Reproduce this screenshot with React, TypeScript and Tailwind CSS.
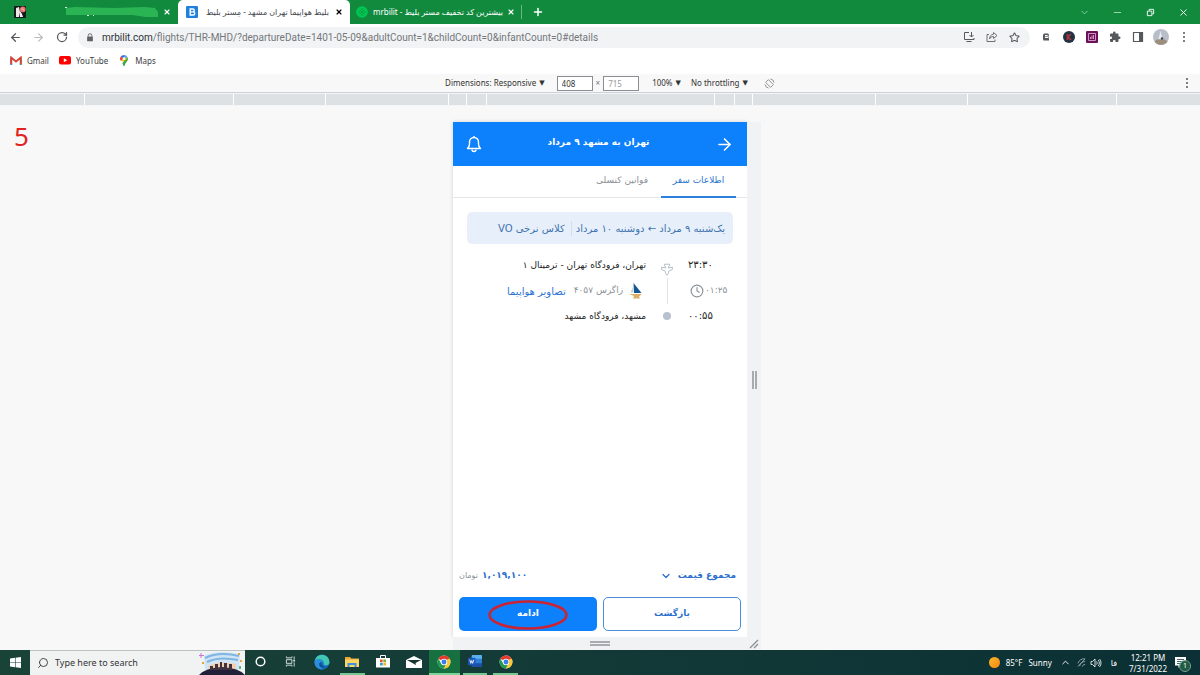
import type { ReactNode } from 'react';
import { ArrowLeft, ArrowRight, ChevronDown, ChevronUp, Clock, Minus, Plus, RotateCw, Search, Star, X } from 'lucide-react';

const RULER_STOPS = [
  'flex-1',
  'w-[149px]',
  'w-[92px]',
  'w-[123px]',
  'w-[18px]',
  'w-[20px]',
  'w-[228px]',
  'w-[20px]',
  'w-[18px]',
  'w-[123px]',
  'w-[92px]',
  'w-[149px]',
  'flex-1',
];

function IconButton({ label, children, className = 'w-[23px]' }: { label: string; children: ReactNode; className?: string }) {
  return (
    <button type="button" aria-label={label} className={`flex h-full shrink-0 items-center justify-center ${className}`}>
      {children}
    </button>
  );
}

function Kebab() {
  return (
    <svg viewBox="0 0 4 12" className="h-3 w-1" fill="#55585c">
      <circle cx="2" cy="2" r="1" />
      <circle cx="2" cy="6" r="1" />
      <circle cx="2" cy="10" r="1" />
    </svg>
  );
}

function ChromeLogo() {
  return (
    <svg viewBox="0 0 48 48" className="size-[14px]">
      <circle cx="24" cy="24" r="22" fill="#fff" />
      <path d="M24 24 4.9 13A22 22 0 0 1 43.1 13z" fill="#e33b2e" />
      <path d="M4.9 13A22 22 0 0 0 24 46l9.5-16.5h-19z" fill="#229a4c" />
      <path d="M43.1 13A22 22 0 0 1 24 46l9.5-16.5L33 16z" fill="#fcc934" />
      <path d="M4.9 13h38.2L24 14z" fill="#e33b2e" />
      <circle cx="24" cy="24" r="11" fill="#fff" />
      <circle cx="24" cy="24" r="8.5" fill="#3b7ded" />
    </svg>
  );
}

function TabStrip() {
  return (
    <header className="flex h-6 items-stretch bg-[#118a3e] text-[8px] text-white">
      <div className="flex w-[178px] items-center gap-1 pr-[7px] pl-[14px]">
        <svg viewBox="0 0 12 12" className="size-3">
          <rect width="12" height="12" rx="1" fill="#15181c" />
          <path d="M2 2l3-1 1 5-1 5H2z" fill="#efe8ea" />
          <path d="M6 5l2 3 1 3H6z" fill="#f5f5f5" />
          <circle cx="8.8" cy="3.4" r="2.8" fill="#e8746b" />
          <path d="M7.5 2.5l3 2" stroke="#f4c3bd" />
        </svg>
        <svg viewBox="0 0 94 12" className="ml-auto h-3 w-[94px]">
          <path d="M1 2 10 1l40 1 30-1 10 1 3 4 0 5-12 0-14-2-66 0z" fill="#2bb454" />
          <path d="M0 1.500h2M22 9.500h2M28 9.500h1" stroke="#d9f2df" />
        </svg>
        <button type="button" aria-label="Close tab">
          <X className="size-2" strokeWidth={3.5} />
        </button>
      </div>
      <div className="flex w-[172px] items-center gap-[6px] rounded-t-[5px] bg-white pr-[7px] pl-2 text-[#45494d]">
        <svg viewBox="0 0 12 12" className="size-3 shrink-0">
          <rect width="12" height="12" rx="1" fill="#2080dc" />
          <path d="M4.200 3h2.600a1.400 1.400 0 0 1 0 2.900H4.200zM4.200 5.900h3a1.500 1.500 0 0 1 0 3.100H4.200z" fill="none" stroke="#fff" strokeWidth="1.400" />
        </svg>
        <span dir="rtl" className="min-w-0 flex-1 whitespace-nowrap">
          بلیط هواپیما تهران مشهد - مِستر بلیط
        </span>
        <button type="button" aria-label="Close tab" className="text-black">
          <X className="size-2" strokeWidth={3.5} />
        </button>
      </div>
      <div className="my-[5px] flex w-[172px] items-center gap-1 border-r border-[#69b884] px-[6px]">
        <svg viewBox="0 0 12 12" className="size-3 shrink-0">
          <circle cx="6" cy="6" r="5.800" fill="#00c853" />
          <path d="M3.500 3.500l5 5M8.500 3.500l-5 5M6 2v2M6 8v2M2 6h2M8 6h2" stroke="#079c45" />
        </svg>
        <span dir="rtl" className="min-w-0 flex-1 whitespace-nowrap">
          بیشترین کد تخفیف مستر بلیط - mrbilit
        </span>
        <button type="button" aria-label="Close tab">
          <X className="size-2" strokeWidth={3.5} />
        </button>
      </div>
      <IconButton label="New tab" className="w-8">
        <Plus className="size-3" strokeWidth={3} />
      </IconButton>
      <div className="ml-auto flex">
        <IconButton label="Search tabs" className="w-[33px]">
          <ChevronDown className="size-[11px] text-[#8fd0a5]" />
        </IconButton>
        <IconButton label="Minimize" className="w-[33px]">
          <Minus className="size-[11px] text-[#a5dab6]" />
        </IconButton>
        <IconButton label="Restore" className="w-[33px]">
          <svg viewBox="0 0 10 10" className="size-[9px]" fill="none" stroke="#fff">
            <path d="M1.500 3.500h5v5h-5zM3.500 3V1.500h5v5H7" />
          </svg>
        </IconButton>
        <IconButton label="Close" className="w-[33px]">
          <X className="size-[11px]" />
        </IconButton>
      </div>
    </header>
  );
}

function Toolbar() {
  return (
    <div className="flex h-[26px] items-center bg-white text-[#55585c]">
      <div className="flex w-[78px] items-center pl-1">
        <IconButton label="Back">
          <ArrowLeft className="size-[13px]" strokeWidth={2.2} />
        </IconButton>
        <IconButton label="Forward">
          <ArrowRight className="size-[13px] text-[#b9bbbe]" />
        </IconButton>
        <IconButton label="Reload">
          <RotateCw className="size-3" strokeWidth={2.5} />
        </IconButton>
      </div>
      <div className="flex h-[21px] min-w-0 flex-1 items-center rounded-full bg-[#f1f3f4]">
        <svg viewBox="0 0 8 10" className="mr-2 ml-2 h-[9px] w-2 shrink-0">
          <path d="M2 4V2.800a2 2 0 0 1 4 0V4" fill="none" stroke="#5f6368" />
          <rect x=".8" y="3.800" width="6.400" height="5.400" rx=".6" fill="#5f6368" />
        </svg>
        <p className="min-w-0 flex-1 truncate font-[Roboto,sans-serif] text-[10px] text-[#74777b]">
          <span className="text-[#2d3034]">mrbilit.com</span>
          /flights/THR-MHD/?departureDate=1401-05-09&amp;adultCount=1&amp;childCount=0&amp;infantCount=0#details
        </p>
        <IconButton label="Install">
          <svg viewBox="0 0 12 12" className="size-3" fill="none" stroke="#55585c">
            <path d="M6 1.500H1.500v7H11V7M3.500 10.500h5M8.500 1v5M6.500 4l2 2 2-2" />
          </svg>
        </IconButton>
        <IconButton label="Share">
          <svg viewBox="0 0 12 12" className="size-3" fill="none" stroke="#6d7074">
            <path d="M3 3.500H1v7h8V8.500M7.500 1.500l3.500 3-3.500 3v-2C5.500 5.500 4 6.500 3.500 8c0-2.500 1.500-4.500 4-4.800z" />
          </svg>
        </IconButton>
        <IconButton label="Bookmark">
          <Star className="size-[11px]" strokeWidth={2.2} />
        </IconButton>
        <span className="w-1" />
      </div>
      <div className="flex h-full w-[170px] items-center pl-1">
        <IconButton label="Extension">
          <svg viewBox="0 0 8 8" className="size-2">
            <path d="M2 .5h4l1 1.300v1H6L5 2H3v3h4v2.500H1.500L1 6V2z" fill="#55585c" />
            <path d="M3 3.500h3.500V6" fill="none" stroke="#77797c" strokeWidth=".8" />
          </svg>
        </IconButton>
        <IconButton label="Keywords">
          <svg viewBox="0 0 12 12" className="size-3">
            <circle cx="6" cy="6" r="6" fill="#233341" />
            <path d="M4.500 3v6M8 3 5 6l3 3" stroke="#a8343d" strokeWidth="1.700" fill="none" />
          </svg>
        </IconButton>
        <IconButton label="Analytics">
          <svg viewBox="0 0 12 12" className="size-3">
            <rect width="12" height="12" rx="1" fill="#6a1159" />
            <path d="M2.500 2.500h7v7h-7zM4.500 8V6M6 8V4.500M7.500 8V4" fill="none" stroke="#d9a7cd" strokeWidth=".9" />
          </svg>
        </IconButton>
        <IconButton label="Extensions">
          <svg viewBox="0 0 24 24" className="size-3" fill="#55585c">
            <path d="M20.500 11H19V7a2 2 0 0 0-2-2h-4V3.500a2.500 2.500 0 0 0-5 0V5H4a2 2 0 0 0-2 2v3.800h1.500a2.700 2.700 0 0 1 0 5.400H2V20a2 2 0 0 0 2 2h3.800v-1.500a2.700 2.700 0 0 1 5.400 0V22H17a2 2 0 0 0 2-2v-4h1.500a2.500 2.500 0 0 0 0-5z" />
          </svg>
        </IconButton>
        <IconButton label="Side panel">
          <svg viewBox="0 0 12 12" className="size-3">
            <path d="M1.500 1.500h9v9h-9z" fill="none" stroke="#55585c" strokeWidth="1.200" />
            <path d="M7 1.500h3.500v9H7z" fill="#55585c" />
          </svg>
        </IconButton>
        <IconButton label="Profile">
          <svg viewBox="0 0 16 16" className="size-4">
            <circle cx="8" cy="8" r="8" fill="#b9bfc9" />
            <path d="M1.500 12.500a8 8 0 0 0 13 0L12 10.500H4z" fill="#9c8d7d" />
            <path d="M7.500 2l2 8h-4z" fill="#e9edf2" />
            <circle cx="9" cy="9.500" r="1.200" fill="#3b3e4c" />
          </svg>
        </IconButton>
        <IconButton label="Menu">
          <Kebab />
        </IconButton>
      </div>
    </div>
  );
}

function Bookmarks() {
  return (
    <nav className="flex h-6 items-center gap-[10px] bg-white pb-[3px] pl-[10px] text-[8px] text-[#3c4043]">
      <a href="#gmail" className="flex items-center gap-[5px]">
        <svg viewBox="0 0 12 9" className="h-[9px] w-3" fill="none" strokeWidth="2">
          <path d="M1.200 9V1.500" stroke="#4a80d8" />
          <path d="M10.800 9V1.500" stroke="#4a9a5c" />
          <path d="M1.200 8V1.500L6 5.500l4.800-4V8" stroke="#dc4437" strokeWidth="1.800" />
        </svg>
        Gmail
      </a>
      <a href="#youtube" className="flex items-center gap-[5px]">
        <svg viewBox="0 0 12 9" className="h-[9px] w-3">
          <rect width="12" height="8.500" rx="2" fill="#f00" />
          <path d="M4.800 2.300v4l3.500-2z" fill="#fff" />
        </svg>
        YouTube
      </a>
      <a href="#maps" className="flex items-center gap-[5px]">
        <svg viewBox="0 0 12 14" className="h-[13px] w-3">
          <path d="M6 1a4.300 4.300 0 0 0-3.500 1.800L6 5.500z" fill="#2f6fde" />
          <path d="M6 1a4.300 4.300 0 0 1 3.900 2.500L6 6z" fill="#57a0f5" />
          <path d="M2.500 2.800C1.500 4 1.500 5.700 2.300 7.200L6 5z" fill="#ea4335" />
          <path d="M9.900 3.500c.8 2-.2 4-1.400 5.300L2.300 7.200 6 5z" fill="#fbbc04" />
          <path d="M9.900 3.500c1 2.500-.8 4.500-2.100 6.300L6.500 13h-1L4.200 9.800 8 6z" fill="#34a853" />
          <circle cx="6" cy="5" r="1.500" fill="#fff" />
        </svg>
        Maps
      </a>
    </nav>
  );
}

function DeviceBar() {
  return (
    <div className="grid h-[19px] grid-cols-[1fr_auto_1fr] items-center border-b border-[#ccd0d8] bg-[#f8f8f8] text-[8px] text-[#333]">
      <span />
      <div className="flex items-center pl-5">
        <button type="button" className="flex items-center gap-[3px]">
          Dimensions: Responsive <span className="text-[7px]">▼</span>
        </button>
        <input aria-label="Width" defaultValue="408" className="ml-3 h-[15px] w-9 border border-[#8a8d91] bg-white px-1" />
        <span className="px-[3px] text-[#777]">×</span>
        <input aria-label="Height" defaultValue="715" className="h-[15px] w-9 border border-[#8a8d91] bg-white px-1 text-[#999]" />
        <button type="button" className="ml-[13px] flex items-center gap-[3px]">
          100% <span className="text-[7px]">▼</span>
        </button>
        <button type="button" className="ml-[10px] flex items-center gap-[3px]">
          No throttling <span className="text-[7px]">▼</span>
        </button>
        <button type="button" aria-label="Rotate" className="ml-4">
          <svg viewBox="0 0 12 12" className="size-[11px]" fill="none" stroke="#6e6e6e" strokeWidth=".8">
            <path d="M1.800 4.800 4.800 1.800l5.400 5.400-3 3zM7 1a5 5 0 0 1 4 4M5 11a5 5 0 0 1-4-4" />
          </svg>
        </button>
      </div>
      <div className="flex justify-end pr-[11px]">
        <button type="button" aria-label="More options">
          <Kebab />
        </button>
      </div>
    </div>
  );
}

function Ruler() {
  return (
    <div className="flex h-[13px] divide-x divide-white border-y border-[#f4f5f7] bg-[#dee1e4]">
      {RULER_STOPS.map((width, i) => (
        <span key={i} className={width} />
      ))}
    </div>
  );
}

function ZagrosLogo() {
  return (
    <svg viewBox="0 0 14 16" className="h-4 w-[14px]">
      <path d="M4.500 0 12.500 10H5z" fill="#14568f" />
      <path d="M4.500 3 1.500 9.500H4z" fill="#bcd2e6" />
      <path d="M0 11h13l-3 2.500 1 2H4l1-2.500z" fill="#dcae66" />
    </svg>
  );
}

function Itinerary() {
  return (
    <section className="grid grid-cols-[40px_42px_1fr] items-center gap-y-[2px] pt-[10px] pr-[19px] text-[9px] text-[#222]">
      <time className="text-left text-[10px] leading-[22px]">۲۳:۳۰</time>
      <svg viewBox="0 0 12 13" className="h-[13px] w-3 self-end justify-self-center" fill="none" stroke="#b4bdcb">
        <path d="M3.500 1.200h5v1.600L7.500 3.300V5l3.800-1v2.500L7.500 8.300v2L6 12.300l-1.500-2v-2L.7 6.500V4l3.800 1V3.300l-1-.5z" />
      </svg>
      <span className="leading-[22px] whitespace-nowrap">تهران، فرودگاه تهران - ترمینال ۱</span>

      <span dir="ltr" className="flex items-center gap-px pl-[2px] text-[#8d9399]">
        <Clock className="size-[14px] shrink-0" strokeWidth={2} />
        ۰۱:۲۵
      </span>
      <span className="h-[26px] w-px justify-self-center bg-[#dfe3e8]" />
      <span className="flex items-center gap-2 whitespace-nowrap text-[#8d9399]">
        <span className="flex items-center gap-[6px] pr-[3px]">
          <ZagrosLogo />
          زاگرس ۴۰۵۷
        </span>
        <a href="#photos" className="text-[10px] text-[#2c74d3]">
          تصاویر هواپیما
        </a>
      </span>

      <time className="text-left text-[10px] leading-[20px]">۰۰:۵۵</time>
      <span className="size-2 justify-self-center rounded-full bg-[#b9c1cf]" />
      <span className="leading-[20px]">مشهد، فرودگاه مشهد</span>
    </section>
  );
}

function Phone() {
  return (
    <main dir="rtl" className="flex flex-col bg-white font-['DejaVu_Sans',sans-serif] shadow-[0_0_4px_rgba(0,0,0,0.15)]">
      <div className="flex h-11 items-center justify-between bg-[#0d80fb] px-[13px] text-white">
        <button type="button" aria-label="بازگشت به نتایج">
          <ArrowRight className="size-[19px]" />
        </button>
        <h1 className="pb-[2px] text-[9px] font-bold">تهران به مشهد ۹ مرداد</h1>
        <button type="button" aria-label="اعلان‌ها">
          <svg viewBox="0 0 16 18" className="h-[18px] w-4" fill="none" stroke="#fff" strokeWidth="1.400">
            <path d="M1.500 13.500c1.500-1.300 2-2.500 2-4.500V7a4.500 4.500 0 0 1 9 0v2c0 2 .5 3.200 2 4.500z" strokeLinejoin="round" />
            <path d="M6 14.500a2 2 0 0 0 4 0M8 2.500V1" />
          </svg>
        </button>
      </div>
      <div role="tablist" className="flex h-8 border-b border-[#e4e6e9] pr-[11px] text-[9px]">
        <button type="button" role="tab" aria-selected="true" className="-mb-px w-[75px] border-b-2 border-[#2a80dc] text-[#2a74cf]">
          اطلاعات سفر
        </button>
        <button type="button" role="tab" aria-selected="false" className="px-[13px] pb-[2px] text-[#8d9197]">
          قوانین کنسلی
        </button>
      </div>
      <div className="mx-[14px] mt-[14px] flex h-8 items-center rounded-[5px] bg-[#e7f0fa] pr-2 text-[10px] whitespace-nowrap text-[#3f72ae]">
        <span className="border-l border-[#d2dfee] pl-1">یک‌شنبه ۹ مرداد ← دوشنبه ۱۰ مرداد</span>
        <span className="pr-[6px]">کلاس نرخی VO</span>
      </div>
      <Itinerary />
      <footer className="mt-auto px-[6px] pb-[6px]">
        <div className="flex h-6 items-center justify-between pr-[5px] text-[9px] font-bold text-[#2c6fd0]">
          <button type="button" className="flex items-center gap-[6px]">
            مجموع قیمت
            <ChevronDown className="size-3" strokeWidth={2.5} />
          </button>
          <p className="flex items-center gap-1">
            ۱,۰۱۹,۱۰۰ <span className="text-[8px] font-normal text-[#8d9197]">تومان</span>
          </p>
        </div>
        <div className="mt-[9px] grid grid-cols-2 gap-[6px] text-[9px] font-bold">
          <button type="button" className="h-[34px] rounded-[5px] border border-[#4a90d9] bg-white text-[#2c6fd0]">
            بازگشت
          </button>
          <button type="button" className="relative h-[34px] rounded-[5px] bg-[#0d80fb] text-white">
            ادامه
            <svg viewBox="0 0 80 30" className="absolute top-[3px] left-[29px] h-[30px] w-20" fill="none">
              <ellipse cx="40" cy="15" rx="38.500" ry="13.500" stroke="#cc2333" strokeWidth="2.600" />
            </svg>
          </button>
        </div>
      </footer>
    </main>
  );
}

function Canvas() {
  return (
    <div className="relative flex min-h-0 flex-1 justify-center bg-[#f8f8f8] pt-4">
      <p className="absolute top-4 left-[14px] text-[26px] leading-7 text-[#e0231f]">5</p>
      <div className="grid grid-cols-[14px_294px_14px] grid-rows-[1fr_13px]">
        <span />
        <Phone />
        <div className="flex items-center justify-center bg-[#f0f2f4]">
          <span className="h-[18px] w-[5px] border-x-2 border-[#a9abae]" />
        </div>
        <span />
        <div className="flex items-center justify-center bg-[#f0f2f4]">
          <span className="h-[5px] w-5 border-y-2 border-[#a9abae]" />
        </div>
        <div className="flex items-center justify-center bg-[#f0f2f4]">
          <svg viewBox="0 0 10 10" className="size-[10px]" stroke="#8c8f93" strokeWidth="1.300">
            <path d="M1 9 9 1M5 9l4-4" />
          </svg>
        </div>
      </div>
    </div>
  );
}

function TaskItem({ label, className = '', children }: { label: string; className?: string; children: ReactNode }) {
  return (
    <button type="button" aria-label={label} className={`flex items-center justify-center border-b-2 ${className || 'border-transparent'}`}>
      {children}
    </button>
  );
}

function Taskbar() {
  return (
    <footer className="flex h-[25px] shrink-0 items-stretch bg-linear-to-r from-[#1a4338] to-[#0b3035] text-[8px] text-white">
      <IconButton label="Start" className="w-[30px]">
        <svg viewBox="0 0 11 11" className="size-[11px]" fill="#fff">
          <path d="M0 1.500 5 .8v4.400H0zM5.600.7 11 0v5.200H5.600zM0 5.800h5v4.400l-5-.7zM5.600 5.800H11V11l-5.400-.7z" />
        </svg>
      </IconButton>
      <label className="flex w-[215px] items-center gap-[6px] border-t border-[#b9c2c0] bg-[#f1f3f2] pl-[7px] text-[#333]">
        <Search className="size-3 shrink-0 -scale-x-100" strokeWidth={1.8} />
        <input aria-label="Search" placeholder="Type here to search" className="min-w-0 flex-1 bg-transparent text-[9px] outline-none placeholder:text-[#333]" />
        <svg viewBox="0 0 46 24" className="h-6 w-[46px] shrink-0">
          <path d="M5 5Q18-2 41 3L40 19H6z" fill="#cfe4f4" />
          <path d="M6 7Q20 0 40 5M8 11q12-6 31-2" fill="none" stroke="#7fb5e2" strokeWidth="2" />
          <path d="M9 15q12-6 28-2v5H10z" fill="#f0cfae" />
          <path d="M0 24q6-7 23-8 17 1 23 8z" fill="#221f38" />
          <path d="M11 19v-4h3v3h2v-5h3v4h2v-6h2v6h2v-5h3v5h2v-4h3v6z" fill="#40313f" />
          <path d="M2 2v5M0 4.500h5" stroke="#c676d4" />
          <path d="M40 2v2M42 9v2M4 11v2" stroke="#e5a741" strokeWidth="2" />
          <path d="M41 15v3" stroke="#57b98c" strokeWidth="2" />
        </svg>
      </label>
      <div className="grid w-[276px] grid-cols-9">
        <TaskItem label="Cortana">
          <svg viewBox="0 0 12 12" className="size-[11px]" fill="none" stroke="#fff" strokeWidth="1.600">
            <circle cx="6" cy="6" r="4.700" />
          </svg>
        </TaskItem>
        <TaskItem label="Task view">
          <svg viewBox="0 0 12 12" className="size-[11px]" fill="none" stroke="#dfe7e5">
            <path d="M1.500 4h6v4h-6zM1.500.5V2h6V.5M1.500 11.500V10h6v1.500M10 .5v3M10 7v4.500" />
            <path d="M9 5h2" strokeWidth="2" />
          </svg>
        </TaskItem>
        <TaskItem label="Edge">
          <svg viewBox="0 0 16 16" className="size-4">
            <circle cx="8" cy="8" r="7.500" fill="#1673c7" />
            <path d="M.6 7A7.500 7.500 0 0 1 15.500 8c0 2.500-2 3.600-4.200 3.200-1.500-.3-1.800-1-1.500-2C9 5 4 4 .6 7z" fill="#42c7b0" />
            <path d="M.6 7C4 3.500 10 5 9.800 9.200 8.500 6.500 5 7 5.200 10.200 5.400 13 7.500 15 9 15.400 3 16-.2 11.500.6 7z" fill="#2a8fdc" />
            <path d="M5.200 10.200C5.500 13.500 9.500 15 14 12.500 10 14 7.500 11.500 7.200 8.500 6 8.500 5.200 9.200 5.200 10.200z" fill="#124f91" />
          </svg>
        </TaskItem>
        <TaskItem label="File Explorer" className="mx-[3px] border-[#76c893]">
          <svg viewBox="0 0 14 12" className="h-3 w-[14px]">
            <path d="M0 1h5l1.500 1.500H14V11H0z" fill="#e9a93a" />
            <path d="M0 3.500h14V11H0z" fill="#fcd768" />
            <path d="M2.500 11V7h9v4h-2V9h-5v2z" fill="#3f93d8" />
          </svg>
        </TaskItem>
        <TaskItem label="Microsoft Store">
          <svg viewBox="0 0 14 15" className="h-[15px] w-[14px]">
            <path d="M4.500 5V1.500h5V5" fill="none" stroke="#fff" />
            <path d="M0 4h14v9.500H0z" fill="#fff" />
            <path d="M4 5.500h2.700v2.700H4z" fill="#e8562e" />
            <path d="M7.300 5.500H10v2.700H7.300z" fill="#7ab530" />
            <path d="M4 8.800h2.700v2.700H4z" fill="#2c9fe0" />
            <path d="M7.300 8.800H10v2.700H7.300z" fill="#f5b81c" />
          </svg>
        </TaskItem>
        <TaskItem label="Mail">
          <svg viewBox="0 0 16 12" className="h-3 w-4">
            <path d="M0 4 8 0l8 4v8H0z" fill="#fff" />
            <path d="M1 4h14L9.500 7 10 9z" fill="#16362f" />
          </svg>
        </TaskItem>
        <TaskItem label="Chrome" className="border-[#7ed39a] bg-[#17703f]">
          <ChromeLogo />
        </TaskItem>
        <TaskItem label="Word" className="mx-[3px] border-[#76c893]">
          <svg viewBox="0 0 15 14" className="h-[13px] w-[14px]">
            <rect x="4" width="11" height="13" rx="1" fill="#2f7fd8" />
            <path d="M4 1a1 1 0 0 1 1-1h9a1 1 0 0 1 1 1v3H4z" fill="#5cb0f0" />
            <path d="M4 9h11v3a1 1 0 0 1-1 1H5a1 1 0 0 1-1-1z" fill="#1c4fa5" />
            <rect y="3" width="8" height="8" rx="1" fill="#1b57ba" />
            <path d="M1.800 5 3 9l1-3 1 3 1.200-4" fill="none" stroke="#fff" strokeWidth=".9" />
          </svg>
        </TaskItem>
        <TaskItem label="Chrome profile" className="mx-[3px] border-[#76c893]">
          <ChromeLogo />
        </TaskItem>
      </div>
      <div className="ml-auto flex items-center pr-[13px]">
        <button type="button" className="flex items-center gap-[6px]">
          <span className="size-[11px] rounded-full bg-linear-to-br from-[#ffb52e] to-[#f08a12]" />
          <span>85°F</span>
          <span>Sunny</span>
        </button>
        <ChevronUp className="ml-2 size-[11px]" />
        <svg viewBox="0 0 10 10" className="ml-[6px] size-[9px]" fill="none" stroke="#9fb5b3">
          <path d="M1 6a7 7 0 0 1 8-5M3 9a6 6 0 0 1 6-5M6 9.500a3 3 0 0 1 3-2.500M1 9.500 9 1" strokeWidth=".9" />
        </svg>
        <svg viewBox="0 0 12 10" className="ml-1 h-[10px] w-3" fill="none" stroke="#e6eeed" strokeWidth=".9">
          <path d="M1 3.500h1.500L5 1v8L2.500 6.500H1zM6.500 3.500a2 2 0 0 1 0 3M8 2a4 4 0 0 1 0 6M9.500 1a6 6 0 0 1 0 8" />
        </svg>
        <span className="ml-[9px]">فا</span>
        <div className="ml-3 text-center leading-[11px]">
          <div>12:21 PM</div>
          <div>7/31/2022</div>
        </div>
        <button type="button" aria-label="1 notification" className="relative ml-2">
          <svg viewBox="0 0 12 12" className="size-3">
            <path d="M0 0h11v8.500H6L3.500 11V8.500H0z" fill="#fff" />
            <path d="M2 2.500h7M2 4.500h7M2 6.500h4" stroke="#14383a" strokeWidth=".8" />
          </svg>
          <span className="absolute top-1 left-[5px] flex size-[10px] items-center justify-center rounded-full bg-[#1f5c43] text-[7px] leading-none outline outline-[#7da594]">
            1
          </span>
        </button>
      </div>
    </footer>
  );
}

export default function App() {
  return (
    <div className="flex h-screen flex-col overflow-hidden font-['Noto_Sans','DejaVu_Sans',sans-serif]">
      <TabStrip />
      <Toolbar />
      <Bookmarks />
      <DeviceBar />
      <Ruler />
      <Canvas />
      <Taskbar />
    </div>
  );
}
